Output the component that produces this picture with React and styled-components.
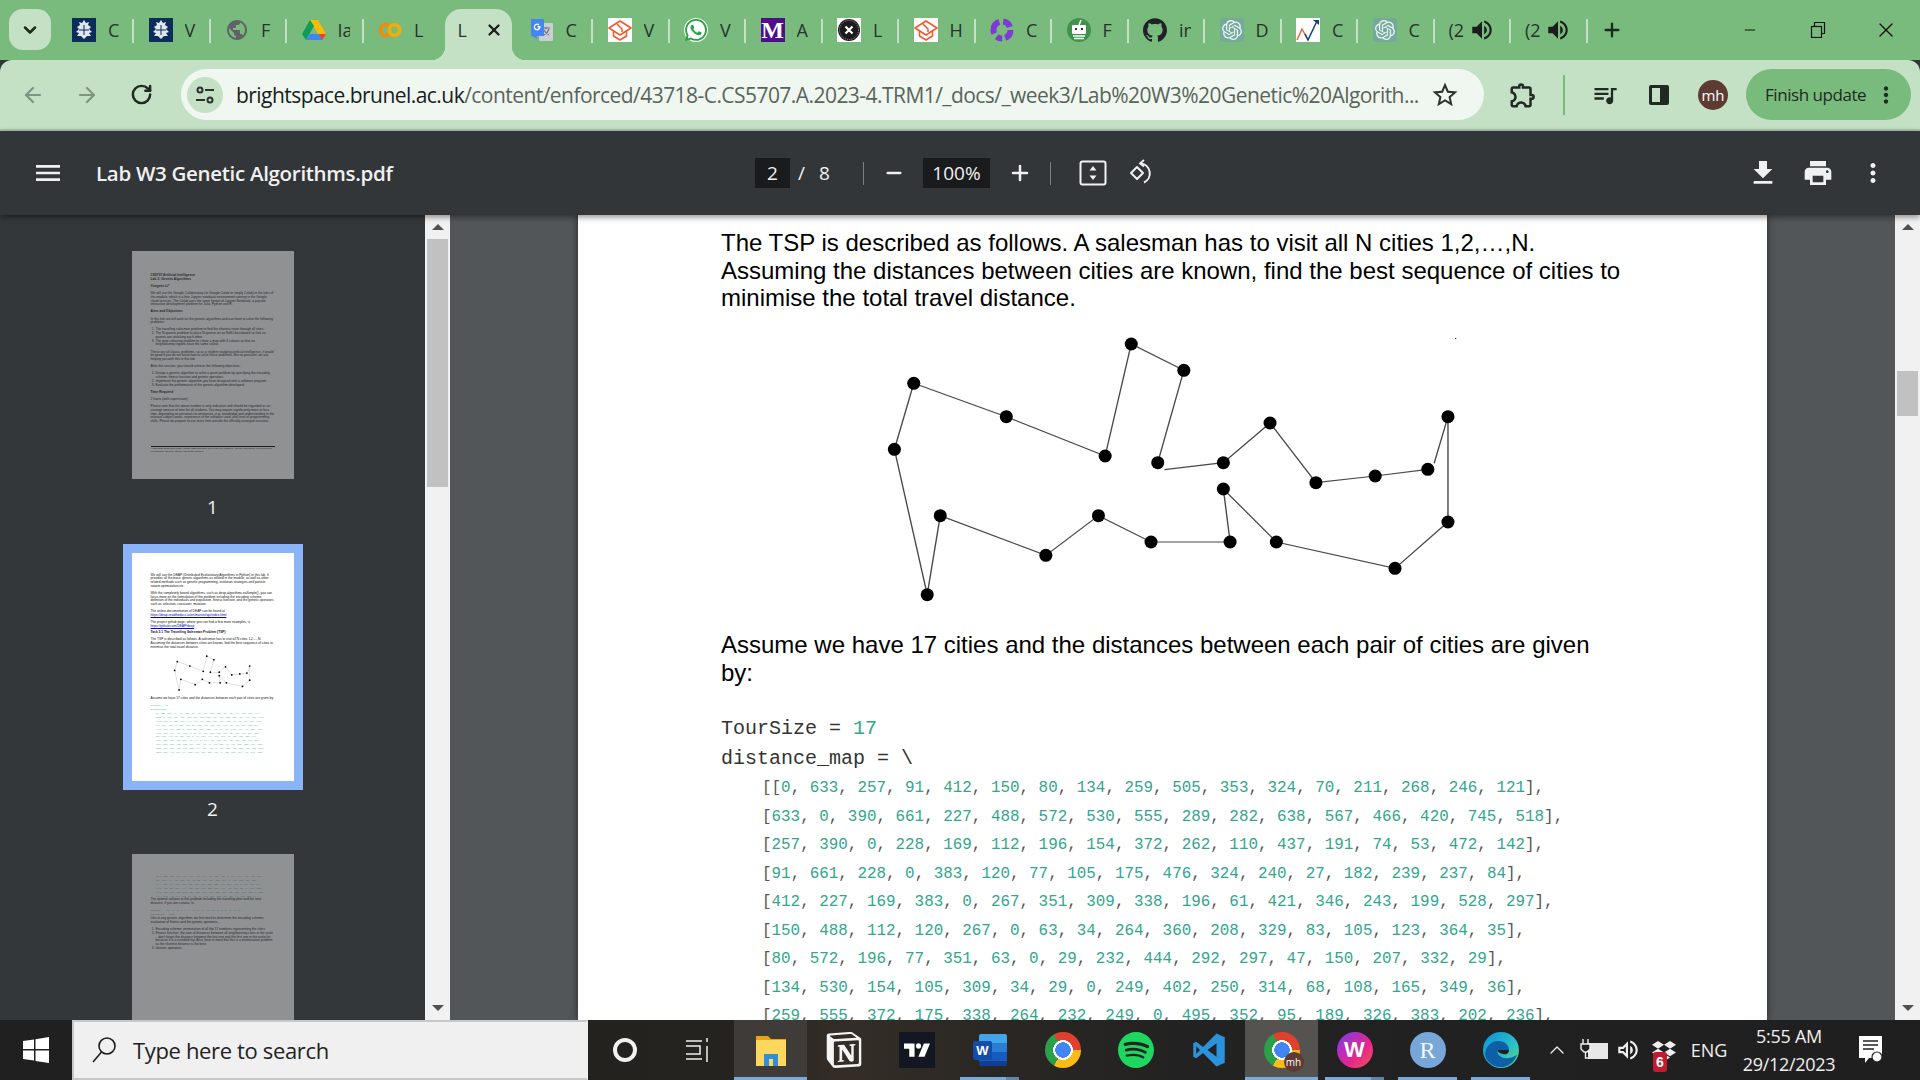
import React from "react";
import styled, { createGlobalStyle } from "styled-components";
import { ArrowLeft, ArrowRight, RotateCw, X, Plus, Minus, ChevronDown, ChevronUp } from "lucide-react";
import {
  MdMenu, MdFileDownload, MdPrint, MdMoreVert, MdVolumeUp, MdPublic,
  MdOutlineExtension, MdOutlineStarBorder, MdQueueMusic, MdOutlineVolumeUp,
} from "react-icons/md";
import {
  SiGithub, SiWhatsapp, SiOpenai, SiSpotify,
  SiNotion, SiTradingview,
} from "react-icons/si";
import { BsDropbox } from "react-icons/bs";

const UI_FONT = `"Open Sans", "Noto Sans", sans-serif`;
const GREEN = "#79bb7d";
const PALE = "#c4e1c5";

const matrix = [
  [0, 633, 257, 91, 412, 150, 80, 134, 259, 505, 353, 324, 70, 211, 268, 246, 121],
  [633, 0, 390, 661, 227, 488, 572, 530, 555, 289, 282, 638, 567, 466, 420, 745, 518],
  [257, 390, 0, 228, 169, 112, 196, 154, 372, 262, 110, 437, 191, 74, 53, 472, 142],
  [91, 661, 228, 0, 383, 120, 77, 105, 175, 476, 324, 240, 27, 182, 239, 237, 84],
  [412, 227, 169, 383, 0, 267, 351, 309, 338, 196, 61, 421, 346, 243, 199, 528, 297],
  [150, 488, 112, 120, 267, 0, 63, 34, 264, 360, 208, 329, 83, 105, 123, 364, 35],
  [80, 572, 196, 77, 351, 63, 0, 29, 232, 444, 292, 297, 47, 150, 207, 332, 29],
  [134, 530, 154, 105, 309, 34, 29, 0, 249, 402, 250, 314, 68, 108, 165, 349, 36],
  [259, 555, 372, 175, 338, 264, 232, 249, 0, 495, 352, 95, 189, 326, 383, 202, 236],
  [505, 289, 262, 476, 196, 360, 444, 402, 495, 0, 154, 578, 439, 336, 240, 685, 390],
  [353, 282, 110, 324, 61, 208, 292, 250, 352, 154, 0, 435, 287, 184, 140, 542, 238],
  [324, 638, 437, 240, 421, 329, 297, 314, 95, 578, 435, 0, 254, 391, 448, 157, 301],
  [70, 567, 191, 27, 346, 83, 47, 68, 189, 439, 287, 254, 0, 145, 202, 289, 55],
  [211, 466, 74, 182, 243, 105, 150, 108, 326, 336, 184, 391, 145, 0, 57, 426, 96],
  [268, 420, 53, 239, 199, 123, 207, 165, 383, 240, 140, 448, 202, 57, 0, 483, 153],
  [246, 745, 472, 237, 528, 364, 332, 349, 202, 685, 542, 157, 289, 426, 483, 0, 336],
  [121, 518, 142, 84, 297, 35, 29, 36, 236, 390, 238, 301, 55, 96, 153, 336, 0],
];

const TSP_TEXT =
  "The TSP is described as follows. A salesman has to visit all N cities 1,2,…,N. Assuming the distances between cities are known, find the best sequence of cities to minimise the total travel distance.";
const ASSUME_TEXT =
  "Assume we have 17 cities and the distances between each pair of cities are given by:";

/* ---------- drawn icons ---------- */

const Crest = () => (
  <svg width="24" height="24" viewBox="0 0 24 24">
    <rect width="24" height="24" fill="#0c2d57" />
    <path d="M12 2l2 3 3-1-1 3 3 2-2 2 3 3-3 1 2 3-4 0-3 3-3-3-4 0 2-3-3-1 3-3-2-2 3-2-1-3 3 1z" fill="#dfe6ee" />
    <path d="M12 7v10M7 12h10" stroke="#0c2d57" strokeWidth="1" />
  </svg>
);

const Drive = () => (
  <svg width="24" height="24" viewBox="0 0 24 24">
    <path d="M8 2h8l8 14h-8z" fill="#fbbc04" />
    <path d="M8 2L0 16l4 6 8-14z" fill="#0f9d58" />
    <path d="M4 22h16l4-6H8z" fill="#4285f4" />
    <path d="M20 22l4-6h-7z" fill="#ea4335" />
  </svg>
);

const Colab = () => (
  <svg width="24" height="24" viewBox="0 0 24 24" fill="none" strokeWidth="3.600">
    <path d="M11 7.500a5.500 5.500 0 1 0 0 9" stroke="#f28a0c" />
    <circle cx="16.500" cy="12" r="5.200" stroke="#f9ab00" />
  </svg>
);

const Translate = () => (
  <svg width="24" height="24" viewBox="0 0 24 24">
    <rect x="9" y="5" width="14" height="18" rx="1" fill="#c9ced3" />
    <path d="M13 10h7M16 9v2M19 11c-1 3-3 5-5 6M14 12c1 2 3 4 5 5" stroke="#6d7781" strokeWidth="1.2" fill="none" />
    <path d="M2 1h11a1 1 0 0 1 1 1v16H6l2 3-6-3a1 1 0 0 1-1-1V2a1 1 0 0 1 1-1z" fill="#4285f4" />
    <path d="M10.5 8H7.6v1.5h1.3a2 2 0 1 1-.6-2.1l1-1a3.4 3.4 0 1 0 1.2 2.6z" fill="#fff" />
  </svg>
);

const EduCap = () => (
  <svg width="24" height="24" viewBox="0 0 24 24">
    <rect width="24" height="24" fill="#fff" />
    <g fill="none" stroke="#f2592a" strokeWidth="1.5" strokeLinejoin="round">
      <path d="M1 10L12 3l11 7-11 7z" />
      <path d="M5.5 12.5v5.5l6.5 4 6.500-4v-5.500" />
      <path d="M9 6l5 5v3" />
    </g>
  </svg>
);

const Edinburgh = () => (
  <svg width="24" height="24" viewBox="0 0 24 24">
    <rect width="24" height="24" fill="#fff" />
    <circle cx="12" cy="12" r="11" fill="#1b1b1b" />
    <circle cx="12" cy="12" r="9.500" fill="none" stroke="#9a9a9a" strokeWidth="1" strokeDasharray="1 1" />
    <path d="M8.500 8.500l7 7M15.500 8.500l-7 7" stroke="#fff" strokeWidth="2.200" />
  </svg>
);

const PurpleRing = () => (
  <svg width="24" height="24" viewBox="0 0 24 24">
    <circle cx="12" cy="12" r="8.500" fill="none" stroke="#7d3ad6" strokeWidth="6" strokeDasharray="10 3 6 4 14 4 9 3" />
  </svg>
);

const Robot = () => (
  <svg width="24" height="24" viewBox="0 0 24 24">
    <circle cx="12" cy="12" r="12" fill="#3f9248" />
    <path d="M12 7l2-5" stroke="#fff" strokeWidth="1.500" />
    <rect x="5" y="7" width="14" height="9" rx="1" fill="#fff" />
    <rect x="8" y="10" width="2" height="2" fill="#333" />
    <rect x="14" y="10" width="2" height="2" fill="#333" />
    <path d="M6 18h12M7 20.500h10" stroke="#fff" strokeWidth="1.500" />
  </svg>
);

const Chart = () => (
  <svg width="24" height="24" viewBox="0 0 24 24">
    <rect width="24" height="24" fill="#fff" />
    <path d="M1 22L6 11l5 9" fill="none" stroke="#e5623f" strokeWidth="1.400" />
    <path d="M9 16l3 6L21 3" fill="none" stroke="#12406f" strokeWidth="1.500" />
    <path d="M17 2h6v5z" fill="#12406f" />
  </svg>
);

const TuneGlyph = () => (
  <svg width="22" height="22" viewBox="0 0 22 22" fill="none" stroke="#2b332c" strokeWidth="2">
    <circle cx="6" cy="6" r="2.500" />
    <path d="M11 6h9M2 16h9" />
    <circle cx="16" cy="16" r="2.500" />
  </svg>
);

const SidePanel = () => (
  <svg width="24" height="24" viewBox="0 0 24 24">
    <rect x="2" y="2" width="20" height="20" rx="2" fill="#1f2a20" />
    <rect x="5" y="5" width="8" height="14" fill={PALE} />
  </svg>
);

const RestoreGlyph = () => (
  <svg width="16" height="16" viewBox="0 0 16 16" fill="none" stroke="#111" strokeWidth="1.200">
    <rect x="1.500" y="4.500" width="10" height="11" />
    <path d="M4.500 4.500v-4h10v11h-3" />
  </svg>
);

const FitGlyph = () => (
  <svg width="28" height="26" viewBox="0 0 28 26">
    <rect x="1.500" y="1.500" width="25" height="23" rx="2" fill="none" stroke="#f1f1f1" strokeWidth="2" />
    <path d="M14 6l3.500 4.500h-7zM14 20l3.500-4.500h-7z" fill="#f1f1f1" />
  </svg>
);

const RotateGlyph = () => (
  <svg width="28" height="28" viewBox="0 0 28 28" fill="none" stroke="#f1f1f1" strokeWidth="2">
    <path d="M14 4.500a10 10 0 0 1 3 19" />
    <path d="M17 1l-4 3.500 4 3" strokeWidth="1.800" />
    <path d="M10 8l6 6-6 6-6-6z" strokeLinejoin="round" />
  </svg>
);

const FolderIcon = () => (
  <svg width="34" height="34" viewBox="0 0 34 34">
    <path d="M2 3h12l3 3h15v6H2z" fill="#e8a317" />
    <rect x="2" y="7" width="30" height="26" fill="#fdd75e" />
    <path d="M10 33V21h14v12h-5v-7h-4v7z" fill="#2f8fdb" />
  </svg>
);

const WordIcon = () => (
  <svg width="36" height="36" viewBox="0 0 36 36">
    <path d="M9 2h24a2 2 0 0 1 2 2v7H7V4a2 2 0 0 1 2-2z" fill="#41a5ee" />
    <rect x="7" y="11" width="28" height="9" fill="#2b7cd3" />
    <rect x="7" y="20" width="28" height="9" fill="#185abd" />
    <path d="M7 29h28v3a2 2 0 0 1-2 2H9a2 2 0 0 1-2-2z" fill="#103f91" />
    <rect x="1" y="9" width="19" height="19" rx="2" fill="#134da8" />
    <text x="10.500" y="23" textAnchor="middle" fontFamily="Liberation Sans" fontWeight="700" fontSize="13" fill="#fff">W</text>
  </svg>
);

const VsCodeIcon = () => (
  <svg width="36" height="36" viewBox="0 0 24 24">
    <path
      fillRule="evenodd"
      d="M17 1L8 10 3.500 6.500 1.500 7.500v9l2 1L8 14l9 9 5.500-2.500V3.500zM17 7.500v9L11 12zM3.500 9.500L6 12l-2.500 2.500z"
      fill="#2a93dc"
    />
  </svg>
);

const EdgeIcon = () => (
  <svg width="38" height="38" viewBox="0 0 38 38">
    <defs>
      <linearGradient id="edgeA" x1="0" y1="0" x2="1" y2="1">
        <stop offset="0" stopColor="#0c8fd6" />
        <stop offset="0.6" stopColor="#2cc0c8" />
        <stop offset="1" stopColor="#5fdc72" />
      </linearGradient>
    </defs>
    <circle cx="19" cy="19" r="18" fill="url(#edgeA)" />
    <path d="M3 22c2-9 8-12 13-12 7 0 11 4 11 9H15c0 6 6 9 12 8 3-.5 6-2 8-3-3 8-10 13-18 12C9 35 3 29 3 22z" fill="#0d5fa8" />
    <path d="M15 19h12c0 3-2 5-6 4-3-.5-5-2-6-4z" fill="#1f1f1f" />
  </svg>
);

const BatteryGlyph = () => (
  <svg width="30" height="24" viewBox="0 0 30 24">
    <rect x="9" y="5" width="20" height="16" fill="#e8e8e8" />
    <path d="M4 1v5M9 1v5M2 6h9v5l-3 3H5l-3-3zM6.500 14v6h3" stroke="#f1f1f1" strokeWidth="1.400" fill="#1f1f1f" />
  </svg>
);

const Bubble = () => (
  <svg width="26" height="30" viewBox="0 0 26 30">
    <path d="M1 1h23v22H11l-4 5v-5H1z" fill="#fff" />
    <path d="M5 6h15M5 10h15M5 14h11" stroke="#222" strokeWidth="1.500" />
    <circle cx="19" cy="22" r="5" fill="#fff" stroke="#222" strokeWidth="1.200" />
  </svg>
);

const Magnifier = () => (
  <svg width="26" height="28" viewBox="0 0 26 28" fill="none" stroke="#1d1d1d" strokeWidth="1.600">
    <circle cx="16" cy="10" r="8" />
    <path d="M10.500 16L2 26" />
  </svg>
);

const Cortana = styled.span`
  width: 24px;
  height: 24px;
  border: 4px solid #f2f2f2;
  border-radius: 50%;
  box-sizing: border-box;
`;

const TaskViewGlyph = () => (
  <svg width="26" height="26" viewBox="0 0 26 26" fill="none" stroke="#f0f0f0" strokeWidth="1.500">
    <path d="M1 4h16M1 22h16M1 9h14v8H1M22 1v4M22 9v16" />
  </svg>
);

const WinLogo = () => (
  <svg width="26" height="26" viewBox="0 0 26 26" fill="#fff">
    <path d="M0 4l11-1.600V12H0zM12.500 2.200L26 0v12H12.500zM0 13.500h11v10L0 22zM12.500 13.500H26V26l-13.500-2z" />
  </svg>
);

const TourGraph = ({ width, height }) => {
  const pts = [
    [686, 72], [819, 151], [753, 428], [919, 428], [1037, 309], [1153, 488], [1303, 468], [1436, 448],
    [1487, 290], [1487, 606], [1353, 745], [1053, 666], [919, 507], [936, 666], [736, 666], [603, 587],
    [470, 706], [203, 587], [170, 824], [87, 388], [136, 190], [370, 290], [620, 408],
  ];
  const tour =
    "M620 408L686 72L819 151L753 428M770 449L919 428L1037 309L1153 488L1303 468L1436 448M1452 430L1487 290L1487 606L1353 745L1053 666L919 507L936 666L736 666L603 587L470 706L203 587L170 824L87 388L136 190L370 290L620 408";
  return (
    <svg width={width} height={height} viewBox="0 0 1568 870" preserveAspectRatio="none">
      <path d={tour} fill="none" stroke="#4a4a4a" strokeWidth="3.500" />
      {pts.map((p, i) => (
        <ellipse key={i} cx={p[0]} cy={p[1]} rx="16.500" ry="19.500" fill="#000" />
      ))}
      <rect x="1505" y="54" width="3" height="3" fill="#222" />
    </svg>
  );
};

/* ---------- page ---------- */

const GlobalStyle = createGlobalStyle`
  html, body {
    margin: 0;
    padding: 0;
    background: #323639;
  }
`;

const Screen = styled.div`
  width: 1920px;
  height: 1080px;
  display: flex;
  flex-direction: column;
  overflow: hidden;
  font-family: ${UI_FONT};
`;

const TabStrip = styled.div`
  height: 51px;
  padding-top: 9px;
  background: ${GREEN};
  display: flex;
  flex: none;
`;

const TabSearch = styled.div`
  width: 42px;
  height: 41px;
  margin: 0 5.5px 0 9px;
  flex: none;
  border-radius: 14px;
  background: ${PALE};
  display: flex;
  align-items: center;
  justify-content: center;
  color: #1b2a1c;
`;

const Tab = styled.div`
  position: relative;
  flex: 0 0 76.5px;
  box-sizing: border-box;
  height: 51px;
  padding: 0 0 9px ${(p) => p.$pad || 15.5}px;
  display: flex;
  align-items: center;
  gap: ${(p) => p.$gap || 12}px;
  color: #26332a;
  font-size: 18px;

  &::after {
    content: "";
    display: ${(p) => (p.$last ? "none" : "block")};
    position: absolute;
    right: -1px;
    top: 10px;
    width: 2px;
    height: 24px;
    background: ${PALE};
  }
`;

const ActiveTab = styled.div`
  position: relative;
  flex: none;
  width: 67px;
  height: 51px;
  margin: 0 4px 0 5.5px;
  box-sizing: border-box;
  padding: 0 0 9px 13px;
  border-radius: 16px 16px 0 0;
  background: ${PALE};
  display: flex;
  align-items: center;
  gap: 18px;
  color: #26332a;
  font-size: 18px;

  &::before,
  &::after {
    content: "";
    position: absolute;
    bottom: 0;
    width: 14px;
    height: 14px;
  }
  &::before {
    left: -14px;
    background: radial-gradient(circle at 0 0, transparent 14px, ${PALE} 14.5px);
  }
  &::after {
    right: -14px;
    background: radial-gradient(circle at 100% 0, transparent 14px, ${PALE} 14.5px);
  }
`;

const TabIcon = styled.span`
  width: 24px;
  height: 24px;
  flex: none;
  display: flex;
  align-items: center;
  justify-content: center;
  background: ${(p) => p.$bg || "transparent"};
  border-radius: ${(p) => p.$round || 0}px;
`;

const TabTitle = styled.span`
  width: ${(p) => p.$w || 12}px;
  overflow: hidden;
  white-space: nowrap;
  flex: none;
`;

const MBox = styled(TabIcon)`
  background: #4f0d8a;
  color: #fff;
  font: 700 24px/24px "Liberation Serif", serif;
`;

const PlusSlot = styled.div`
  width: 50px;
  height: 42px;
  display: flex;
  align-items: center;
  justify-content: center;
  color: #1b2a1c;
`;

const WindowButtons = styled.div`
  margin-left: auto;
  display: flex;
  height: 42px;
`;

const WinButton = styled.div`
  width: ${(p) => p.$w || 68}px;
  display: flex;
  align-items: center;
  justify-content: center;
  color: #111;
`;

const NavBar = styled.div`
  height: 69px;
  flex: none;
  position: relative;
  background: ${PALE};
  border-radius: 12px 12px 0 0;
  border-bottom: 2px solid #b1c5b2;
  display: flex;
  align-items: center;
  padding-left: 6px;
`;

const NavSlot = styled.div`
  width: 54px;
  height: 51px;
  flex: none;
  display: flex;
  align-items: center;
  justify-content: center;
  color: ${(p) => p.$color || "#1f2a20"};
`;

const Omnibox = styled.div`
  width: 1303px;
  height: 51px;
  margin: 0 12px 0 13px;
  flex: none;
  box-sizing: border-box;
  padding: 0 24px 0 6px;
  border-radius: 26px;
  background: #f0f7f0;
  display: flex;
  align-items: center;
`;

const TuneCircle = styled.div`
  width: 36px;
  height: 36px;
  flex: none;
  border-radius: 50%;
  background: ${PALE};
  display: flex;
  align-items: center;
  justify-content: center;
  margin-right: 13px;
`;

const Url = styled.div`
  flex: 1;
  font-size: 21px;
  white-space: nowrap;
  color: #59655a;
  letter-spacing: -0.55px;

  b {
    font-weight: 400;
    color: #17211a;
  }
`;

const NavDivider = styled.div`
  width: 2px;
  height: 40px;
  margin: 0 13px;
  flex: none;
  background: ${GREEN};
`;

const Avatar = styled.div`
  width: 30px;
  height: 30px;
  border-radius: 50%;
  background: #5d3b33;
  color: #fff;
  font-size: 15px;
  display: flex;
  align-items: center;
  justify-content: center;
`;

const FinishPill = styled.div`
  width: 165px;
  height: 51px;
  margin-left: 6px;
  flex: none;
  box-sizing: border-box;
  padding: 0 12px 0 19px;
  border-radius: 26px;
  background: ${GREEN};
  color: #1f2a20;
  font-size: 17px;
  letter-spacing: -0.45px;
  display: flex;
  align-items: center;
  justify-content: space-between;
  white-space: nowrap;
`;

const PdfBar = styled.div`
  height: 84px;
  flex: none;
  position: relative;
  z-index: 2;
  background: #323639;
  box-shadow: 0 2px 6px rgba(0, 0, 0, 0.45);
  display: flex;
  align-items: center;
  color: #f1f1f1;
`;

const PdfLeft = styled.div`
  width: 755px;
  flex: none;
  display: flex;
  align-items: center;
`;

const Hamburger = styled.div`
  width: 96px;
  display: flex;
  justify-content: center;
`;

const PdfTitle = styled.div`
  font-size: 20.5px;
  font-weight: 600;
  letter-spacing: -0.3px;
  white-space: nowrap;
`;

const InputBox = styled.div`
  width: ${(p) => p.$w}px;
  height: 30px;
  flex: none;
  background: #191b1c;
  display: flex;
  align-items: center;
  justify-content: center;
  font-size: 19px;
`;

const PageCount = styled.div`
  width: 73px;
  flex: none;
  display: flex;
  gap: 14px;
  padding-left: 8px;
  box-sizing: border-box;
  font-size: 19px;
`;

const BarDivider = styled.div`
  width: 1px;
  height: 23px;
  flex: none;
  background: #7d8083;
`;

const BarSlot = styled.div`
  width: ${(p) => p.$w}px;
  flex: none;
  display: flex;
  align-items: center;
  justify-content: center;

  svg {
    flex: none;
  }
`;

const BarRight = styled.div`
  margin-left: auto;
  padding-right: 20px;
  display: flex;
`;

const Main = styled.div`
  flex: none;
  height: 805px;
  display: flex;
  overflow: hidden;
`;

const Sidebar = styled.div`
  width: 425px;
  flex: none;
  background: #33373a;
  box-sizing: border-box;
  padding-top: 36px;
  display: flex;
  flex-direction: column;
  align-items: center;
  overflow: hidden;
`;

const ThumbItem = styled.div`
  flex: none;
  display: flex;
  flex-direction: column;
  align-items: center;
  margin-bottom: 17.5px;
`;

const ThumbPaper = styled.div`
  width: 162px;
  height: 228px;
  flex: none;
  box-sizing: border-box;
  padding: ${(p) => p.$top}px 19px 0;
  background: #fff;
  overflow: hidden;
  color: #111;
  font: 3.27px/3.75px "Liberation Sans", sans-serif;
  opacity: ${(p) => (p.$on ? 1 : 0.45)};
  box-shadow: ${(p) => (p.$on ? "0 0 0 9px #8ab4f8" : "none")};

  p {
    margin: 0 0 3.400px;
  }
  h5 {
    margin: 3px 0 3.400px;
    font-size: 3.270px;
    font-weight: 700;
  }
`;

const ThumbLabel = styled.div`
  height: 56px;
  display: flex;
  align-items: center;
  color: #f1f1f1;
  font-size: 19px;
`;

const ThumbList = styled.ol`
  margin: 0 0 3.400px;
  padding-left: 5px;
`;

const ThumbLink = styled.span`
  display: block;
  color: #00c;
  text-decoration: underline;
  margin-bottom: 3px;
`;

const ThumbRule = styled.div`
  border-top: 0.7px solid #000;
  margin-top: 22px;
  padding-top: 1px;
  font-size: 2.500px;
  line-height: 2.800px;
`;

const ThumbGraph = styled.div`
  padding-left: 19px;
  height: 39px;
  margin-bottom: 5px;
`;

const ThumbCode = styled.div`
  font: 2.180px/3.900px "Liberation Mono", monospace;
  color: #33a68c;
  white-space: nowrap;
  padding-left: ${(p) => p.$indent || 0}px;
`;

const Scrollbar = styled.div`
  width: 25px;
  flex: none;
  background: #f1f1f1;
  display: flex;
  flex-direction: column;
  align-items: center;
  box-sizing: border-box;
  padding: 9px 0 9px;
`;

const ScrollUp = styled.div`
  flex: none;
  width: 0;
  height: 0;
  border-left: 6px solid transparent;
  border-right: 6px solid transparent;
  border-bottom: 6px solid #505050;
`;

const ScrollDown = styled(ScrollUp)`
  margin-top: auto;
  border-bottom: 0;
  border-top: 6px solid #505050;
`;

const ScrollThumb = styled.div`
  width: 21px;
  height: ${(p) => p.$h}px;
  margin-top: ${(p) => p.$top}px;
  flex: none;
  background: #c1c1c1;
`;

const Viewer = styled.div`
  flex: 1;
  display: flex;
  background: #525659;
  overflow: hidden;
`;

const Paper = styled.div`
  width: 1189px;
  margin-left: 128px;
  flex: none;
  box-sizing: border-box;
  padding: 14px 143px 0;
  background: #fff;
  box-shadow: 0 0 7px rgba(0, 0, 0, 0.55);
  overflow: hidden;
`;

const Para = styled.p`
  margin: ${(p) => p.$top || 0}px 0 0;
  font: 24px/27.5px "Liberation Sans", Arial, sans-serif;
  color: #000;
`;

const GraphWrap = styled.div`
  margin: 8.500px 0 0 139px;
  height: 290px;

  svg {
    display: block;
  }
`;

const CodeLine = styled.div`
  font: 20px/30px "Liberation Mono", monospace;
  color: #333;
  white-space: pre;
  margin-top: ${(p) => p.$top || 0}px;
`;

const Num = styled.span`
  color: #33a68c;
`;

const MatrixRow = styled.div`
  font: 15.900px/28.500px "Liberation Mono", monospace;
  color: #555;
  white-space: pre;
  padding-left: 41px;
`;

const ViewerScroll = styled(Scrollbar)`
  margin-left: auto;
`;

const Taskbar = styled.div`
  height: 60px;
  flex: none;
  position: relative;
  z-index: 3;
  display: flex;
  background: linear-gradient(90deg, #202020 0, #25231f 38%, #342d27 44%, #2a2723 52%, #222 62%, #1f1f1f 100%);
`;

const StartButton = styled.div`
  width: 72px;
  flex: none;
  display: flex;
  align-items: center;
  justify-content: center;
`;

const SearchBox = styled.div`
  width: 516px;
  flex: none;
  box-sizing: border-box;
  padding-left: 17px;
  background: #f0f0f0;
  border: 2px solid #c8c8c8;
  border-right-color: #f0f0f0;
  display: flex;
  align-items: center;
  gap: 16px;
  font-size: 22px;
  letter-spacing: -0.35px;
  color: #222;
`;

const TaskCell = styled.div`
  position: relative;
  width: 73px;
  flex: none;
  display: flex;
  align-items: center;
  justify-content: center;
  background: ${(p) => p.$bg || "transparent"};

  &::after {
    content: "";
    display: ${(p) => (p.$inset === undefined ? "none" : "block")};
    position: absolute;
    left: ${(p) => p.$inset}px;
    right: ${(p) => p.$inset}px;
    bottom: 0;
    height: 3px;
    background: ${(p) =>
      p.$stack
        ? "linear-gradient(90deg, #76abdc 0 78%, #5c86ab 78% 100%)"
        : "#76abdc"};
  }
`;

const ChromeLogo = styled.span`
  position: relative;
  display: block;
  width: 36px;
  height: 36px;
  border-radius: 50%;
  background: radial-gradient(circle closest-side, #4285f4 0 42%, #fff 44% 54%, transparent 56%),
    conic-gradient(from 330deg, #e2402f 0 120deg, #fbbc16 0 240deg, #2b9f49 0);
`;

const ProfileBadge = styled.span`
  position: absolute;
  right: -4px;
  bottom: -4px;
  width: 20px;
  height: 20px;
  border-radius: 50%;
  background: #5d3b33;
  color: #fff;
  font-size: 10px;
  display: flex;
  align-items: center;
  justify-content: center;
`;

const WpsLogo = styled.span`
  width: 36px;
  height: 36px;
  border-radius: 50%;
  background: linear-gradient(135deg, #7a3df0, #e6248f 60%, #f2584e);
  color: #fff;
  font: 700 22px/36px "Liberation Sans", sans-serif;
  text-align: center;
`;

const RLogo = styled.span`
  width: 36px;
  height: 36px;
  border-radius: 50%;
  background: #76a7d8;
  color: #f4f8fc;
  font: 400 24px/36px "Liberation Serif", serif;
  text-align: center;
`;

const NotionBox = styled.span`
  display: flex;
  color: #f4f4f4;
`;

const TvBox = styled.span`
  width: 36px;
  height: 36px;
  background: #131722;
  display: flex;
  align-items: center;
  justify-content: center;
  color: #fff;
`;

const TrayItem = styled.div`
  position: relative;
  width: ${(p) => p.$w}px;
  flex: none;
  display: flex;
  flex-direction: column;
  align-items: center;
  justify-content: center;
  color: #f0f0f0;
  font-size: 18px;
  white-space: nowrap;
`;

const ClockText = styled.span`
  font-size: 18px;
  letter-spacing: -0.3px;
  line-height: 28px;
`;

const TrayBadge = styled.span`
  position: absolute;
  left: 8px;
  bottom: 8px;
  width: 14px;
  height: 20px;
  border-radius: 3px;
  background: #c21b2d;
  color: #fff;
  font: 700 14px/20px "Liberation Sans", sans-serif;
  text-align: center;
`;

const Tabs = () => (
  <TabStrip>
    <TabSearch><ChevronDown size={20} strokeWidth={3} /></TabSearch>
    <Tab><TabIcon><Crest /></TabIcon><TabTitle>C</TabTitle></Tab>
    <Tab><TabIcon><Crest /></TabIcon><TabTitle>V</TabTitle></Tab>
    <Tab><TabIcon><MdPublic size={26} color="#5f6368" /></TabIcon><TabTitle>F</TabTitle></Tab>
    <Tab><TabIcon><Drive /></TabIcon><TabTitle>Ia</TabTitle></Tab>
    <Tab $last><TabIcon><Colab /></TabIcon><TabTitle>L</TabTitle></Tab>
    <ActiveTab><span>L</span><X size={18} strokeWidth={3} color="#1c1c1c" /></ActiveTab>
    <Tab $pad={14}><TabIcon><Translate /></TabIcon><TabTitle>C</TabTitle></Tab>
    <Tab><TabIcon><EduCap /></TabIcon><TabTitle>V</TabTitle></Tab>
    <Tab><TabIcon $bg="#fff" $round={12}><SiWhatsapp size={22} color="#25a244" /></TabIcon><TabTitle>V</TabTitle></Tab>
    <Tab><MBox>M</MBox><TabTitle>A</TabTitle></Tab>
    <Tab><TabIcon><Edinburgh /></TabIcon><TabTitle>L</TabTitle></Tab>
    <Tab><TabIcon><EduCap /></TabIcon><TabTitle>H</TabTitle></Tab>
    <Tab><TabIcon><PurpleRing /></TabIcon><TabTitle>C</TabTitle></Tab>
    <Tab><TabIcon><Robot /></TabIcon><TabTitle>F</TabTitle></Tab>
    <Tab><TabIcon><SiGithub size={24} color="#1f2328" /></TabIcon><TabTitle>in</TabTitle></Tab>
    <Tab><TabIcon $bg="#74aa9c" $round={3}><SiOpenai size={20} color="#eef5f3" /></TabIcon><TabTitle>D</TabTitle></Tab>
    <Tab><TabIcon><Chart /></TabIcon><TabTitle>C</TabTitle></Tab>
    <Tab><TabIcon $bg="#74aa9c" $round={3}><SiOpenai size={20} color="#eef5f3" /></TabIcon><TabTitle>C</TabTitle></Tab>
    <Tab $pad={15} $gap={2}><TabTitle $w={18}>(2</TabTitle><MdVolumeUp size={26} color="#1c1c1c" /></Tab>
    <Tab $pad={15} $gap={2}><TabTitle $w={18}>(2</TabTitle><MdVolumeUp size={26} color="#1c1c1c" /></Tab>
    <PlusSlot><Plus size={22} strokeWidth={2.5} /></PlusSlot>
    <WindowButtons>
      <WinButton><Minus size={16} strokeWidth={1.8} /></WinButton>
      <WinButton><RestoreGlyph /></WinButton>
      <WinButton><X size={24} strokeWidth={1.4} /></WinButton>
    </WindowButtons>
  </TabStrip>
);

const Nav = () => (
  <NavBar>
    <NavSlot $color="#7f9482"><ArrowLeft size={24} strokeWidth={2.2} /></NavSlot>
    <NavSlot $color="#7f9482"><ArrowRight size={24} strokeWidth={2.2} /></NavSlot>
    <NavSlot><RotateCw size={23} strokeWidth={2.6} /></NavSlot>
    <Omnibox>
      <TuneCircle><TuneGlyph /></TuneCircle>
      <Url>
        <b>brightspace.brunel.ac.uk</b>/content/enforced/43718-C.CS5707.A.2023-4.TRM1/_docs/_week3/Lab%20W3%20Genetic%20Algorith...
      </Url>
      <MdOutlineStarBorder size={30} color="#2b332c" />
    </Omnibox>
    <NavSlot><MdOutlineExtension size={30} /></NavSlot>
    <NavDivider />
    <NavSlot><MdQueueMusic size={28} /></NavSlot>
    <NavSlot><SidePanel /></NavSlot>
    <NavSlot><Avatar>mh</Avatar></NavSlot>
    <FinishPill>Finish update<MdMoreVert size={26} /></FinishPill>
  </NavBar>
);

const PdfToolbar = () => (
  <PdfBar>
    <PdfLeft>
      <Hamburger><MdMenu size={32} /></Hamburger>
      <PdfTitle>Lab W3 Genetic Algorithms.pdf</PdfTitle>
    </PdfLeft>
    <InputBox $w={35}>2</InputBox>
    <PageCount><span>/</span><span>8</span></PageCount>
    <BarDivider />
    <BarSlot $w={59}><Minus size={22} strokeWidth={2.500} /></BarSlot>
    <InputBox $w={67}>100%</InputBox>
    <BarSlot $w={60}><Plus size={24} strokeWidth={2.500} /></BarSlot>
    <BarDivider />
    <BarSlot $w={83}><FitGlyph /></BarSlot>
    <BarSlot $w={14}><RotateGlyph /></BarSlot>
    <BarRight>
      <BarSlot $w={55}><MdFileDownload size={32} /></BarSlot>
      <BarSlot $w={55}><MdPrint size={32} /></BarSlot>
      <BarSlot $w={55}><MdMoreVert size={30} /></BarSlot>
    </BarRight>
  </PdfBar>
);

const ThumbMatrix = ({ rows }) =>
  rows.map((r, i) => <ThumbCode key={i} $indent={5}>{JSON.stringify(r).replace(/,/g, ", ")},</ThumbCode>);

const Thumbnails = () => (
  <Sidebar>
    <ThumbItem>
      <ThumbPaper $top={20}>
        <h5>CS5707 Artificial Intelligence<br />Lab 3: Genetic Algorithms</h5>
        <h5>Yongmin Li*</h5>
        <p>We will use the Google Colaboratory (or Google Colab or simply Colab) in the labs of this module, which is a free Jupyter notebook environment running in the Google cloud services. The Colab uses the same format of Jupyter Notebook, a popular interactive development platform for Julia, Python and R.</p>
        <h5>Aims and Objectives</h5>
        <p>In this lab, we will work on the genetic algorithms and use them to solve the following problems:</p>
        <ThumbList>
          <li>The travelling salesman problem to find the shortest route through all cities.</li>
          <li>The N-queens problem to place N queens on an NxN chessboard so that no queens are attacking each other.</li>
          <li>The map colouring problem to colour a map with 4 colours so that no neighbouring regions have the same colour.</li>
        </ThumbList>
        <p>These are all classic problems, so as a student studying artificial intelligence, it would be good if you do not know how to solve these problems. But no pressure, we are helping you with this in this lab.</p>
        <p>After this session, you should achieve the following objectives:</p>
        <ThumbList>
          <li>Design a genetic algorithm to solve a given problem by specifying the encoding scheme, fitness function and genetic operators.</li>
          <li>Implement the genetic algorithm you have designed with a software program.</li>
          <li>Evaluate the performance of the genetic algorithm developed.</li>
        </ThumbList>
        <h5>Time Required</h5>
        <p>2 hours (with supervision).</p>
        <p>Please note that the above number is only indicative and should be regarded as an average amount of time for all students. You may require significantly more or less time, depending on personal circumstances, e.g. knowledge and understanding in the relevant subject areas, experience of the software used, and level of programming skills. Please do prepare to use more time outside the officially arranged sessions.</p>
        <ThumbRule>* First draft September 2020. These materials have been used for CS5707 Artificial Intelligence at Department of Computer Science, Brunel University London.</ThumbRule>
      </ThumbPaper>
      <ThumbLabel>1</ThumbLabel>
    </ThumbItem>
    <ThumbItem>
      <ThumbPaper $top={21} $on>
        <p>We will use the DEAP (Distributed Evolutionary Algorithms in Python) in this lab. It provides all the basic genetic algorithms as related in the module, as well as other related methods such as genetic programming, evolution strategies and particle swarm optimization etc.</p>
        <p>With the completely boxed algorithms, such as deap.algorithms.eaSimple(), you can focus more on the formulation of the problem including the encoding scheme, definition of the individuals and population, fitness function, and the genetic operators such as selection, crossover, mutation.</p>
        <div>The online documentation of DEAP can be found at</div>
        <ThumbLink>https://deap.readthedocs.io/en/master/api/index.html</ThumbLink>
        <div>The project github page, where you can find a few more examples, is</div>
        <ThumbLink>https://github.com/DEAP/deap</ThumbLink>
        <h5>Task 3.1 The Travelling Salesman Problem (TSP)</h5>
        <p>{TSP_TEXT}</p>
        <ThumbGraph><TourGraph width={84} height={39} /></ThumbGraph>
        <p>{ASSUME_TEXT}</p>
        <ThumbCode>TourSize = 17</ThumbCode>
        <ThumbCode>distance_map = \</ThumbCode>
        <ThumbMatrix rows={matrix.slice(0, 11)} />
      </ThumbPaper>
      <ThumbLabel>2</ThumbLabel>
    </ThumbItem>
    <ThumbItem>
      <ThumbPaper $top={21}>
        <ThumbMatrix rows={matrix.slice(11)} />
        <p>The optimal solution to this problem including the travelling plan and the total distance, if you are curious, is:</p>
        <ThumbCode>bestTour = [15, 11, 8, 4, 1, 9, 10, 2, 14, 13, 16, 5, 7, 6, 12, 3, 0]</ThumbCode>
        <ThumbCode>optDistance = 2085</ThumbCode>
        <p>Like in any genetic algorithm, we first need to determine the encoding scheme, evaluation of fitness and the genetic operators.</p>
        <ThumbList>
          <li>Encoding scheme: permutation of all the 17 numbers representing the cities.</li>
          <li>Fitness function: the sum of distances between all neighbouring cities in the route – don't forget the distance between the last one and the first one in the route list because it is a rounded trip. Also, bear in mind that this is a minimisation problem as the shortest distance is the best.</li>
          <li>Genetic operators:</li>
        </ThumbList>
      </ThumbPaper>
    </ThumbItem>
  </Sidebar>
);

const DocPage = () => (
  <Paper>
    <Para>{TSP_TEXT}</Para>
    <GraphWrap><TourGraph width={620} height={290} /></GraphWrap>
    <Para $top={21}>{ASSUME_TEXT}</Para>
    <CodeLine $top={28}>TourSize = <Num>17</Num></CodeLine>
    <CodeLine>distance_map = \</CodeLine>
    {matrix.slice(0, 10).map((row, i) => (
      <MatrixRow key={i}>
        {i === 0 ? "[[" : "["}
        {row.map((n, j) => (
          <React.Fragment key={j}>
            <Num>{n}</Num>
            {j < row.length - 1 ? ", " : "],"}
          </React.Fragment>
        ))}
      </MatrixRow>
    ))}
  </Paper>
);

const TaskBar = () => (
  <Taskbar>
    <StartButton><WinLogo /></StartButton>
    <SearchBox><Magnifier />Type here to search</SearchBox>
    <TaskCell><Cortana /></TaskCell>
    <TaskCell><TaskViewGlyph /></TaskCell>
    <TaskCell $bg="#3e3b38" $inset={0}><FolderIcon /></TaskCell>
    <TaskCell><NotionBox><SiNotion size={36} /></NotionBox></TaskCell>
    <TaskCell><TvBox><SiTradingview size={26} /></TvBox></TaskCell>
    <TaskCell $inset={7} $stack><WordIcon /></TaskCell>
    <TaskCell><ChromeLogo /></TaskCell>
    <TaskCell><SiSpotify size={36} color="#1ed760" /></TaskCell>
    <TaskCell><VsCodeIcon /></TaskCell>
    <TaskCell $bg="#555350" $inset={0}><ChromeLogo><ProfileBadge>mh</ProfileBadge></ChromeLogo></TaskCell>
    <TaskCell $inset={7} $stack><WpsLogo>W</WpsLogo></TaskCell>
    <TaskCell $inset={7}><RLogo>R</RLogo></TaskCell>
    <TaskCell $inset={7}><EdgeIcon /></TaskCell>
    <TrayItem $w={40}><ChevronUp size={24} strokeWidth={1.300} /></TrayItem>
    <TrayItem $w={34}><BatteryGlyph /></TrayItem>
    <TrayItem $w={34}><MdOutlineVolumeUp size={26} /></TrayItem>
    <TrayItem $w={38}><BsDropbox size={24} /><TrayBadge>6</TrayBadge></TrayItem>
    <TrayItem $w={52}>ENG</TrayItem>
    <TrayItem $w={108}>
      <ClockText>5:55 AM</ClockText>
      <ClockText>29/12/2023</ClockText>
    </TrayItem>
    <TrayItem $w={56}><Bubble /></TrayItem>
  </Taskbar>
);

const App = () => (
  <Screen>
    <GlobalStyle />
    <Tabs />
    <Nav />
    <PdfToolbar />
    <Main>
      <Thumbnails />
      <Scrollbar>
        <ScrollUp />
        <ScrollThumb $top={9} $h={248} />
        <ScrollDown />
      </Scrollbar>
      <Viewer>
        <DocPage />
        <ViewerScroll>
          <ScrollUp />
          <ScrollThumb $top={141} $h={45} />
          <ScrollDown />
        </ViewerScroll>
      </Viewer>
    </Main>
    <TaskBar />
  </Screen>
);

export default App;
